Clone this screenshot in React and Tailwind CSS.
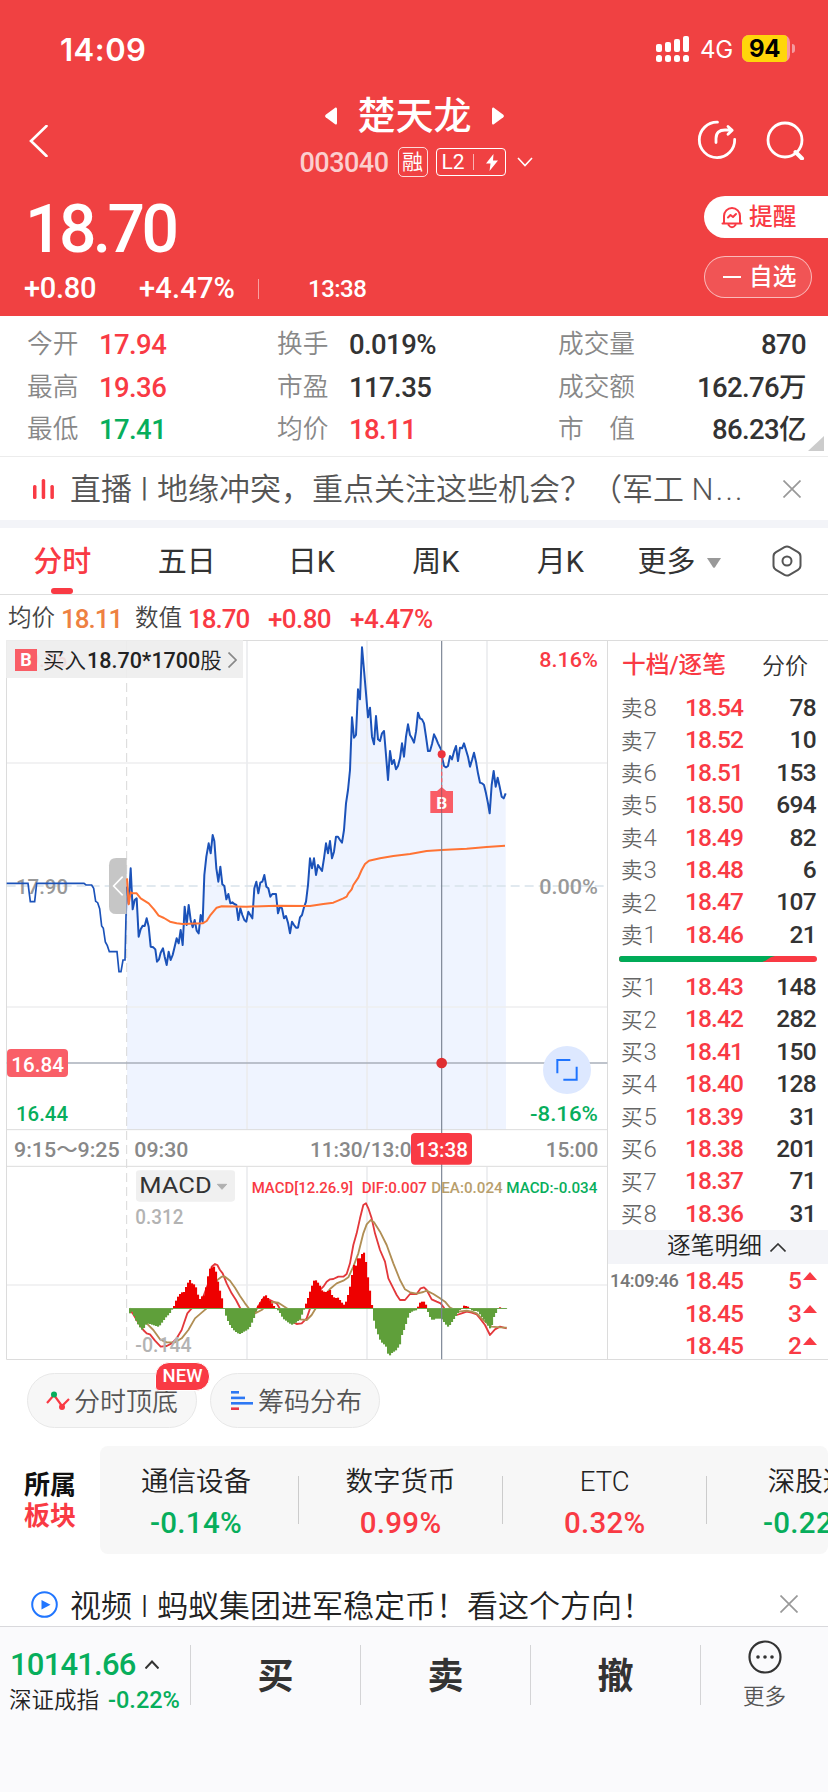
import { clsx } from 'clsx';

const STATS = [
  [
    { label: '今开', value: '17.94', tone: 'text-[#f93a44]' },
    { label: '最高', value: '19.36', tone: 'text-[#f93a44]' },
    { label: '最低', value: '17.41', tone: 'text-[#07ae5c]' },
  ],
  [
    { label: '换手', value: '0.019%', tone: 'text-[#333]' },
    { label: '市盈', value: '117.35', tone: 'text-[#333]' },
    { label: '均价', value: '18.11', tone: 'text-[#f93a44]' },
  ],
  [
    { label: '成交量', value: '870', tone: 'text-[#333]' },
    { label: '成交额', value: '162.76万', tone: 'text-[#333]' },
    { label: '市　值', value: '86.23亿', tone: 'text-[#333]' },
  ],
];

const TABS = ['分时', '五日', '日K', '周K', '月K'];

const ASKS = [
  ['卖8', '18.54', 78],
  ['卖7', '18.52', 10],
  ['卖6', '18.51', 153],
  ['卖5', '18.50', 694],
  ['卖4', '18.49', 82],
  ['卖3', '18.48', 6],
  ['卖2', '18.47', 107],
  ['卖1', '18.46', 21],
];

const BIDS = [
  ['买1', '18.43', 148],
  ['买2', '18.42', 282],
  ['买3', '18.41', 150],
  ['买4', '18.40', 128],
  ['买5', '18.39', 31],
  ['买6', '18.38', 201],
  ['买7', '18.37', 71],
  ['买8', '18.36', 31],
];

const TRADES = [
  ['14:09:46', '18.45', 5],
  ['', '18.45', 3],
  ['', '18.45', 2],
];

const SECTORS = [
  { name: '通信设备', change: '-0.14%', up: false },
  { name: '数字货币', change: '0.99%', up: true },
  { name: 'ETC', change: '0.32%', up: true },
  { name: '深股通', change: '-0.22%', up: false },
];

// Chart data is kept in a 1824 x 2160 space, three units to a pixel.
const PRE_OPEN =
  '20,730 84,730 91,785 104,785 110,730 252,730 258,735 275,735 281,745 287,784 293,788 299,806 305,858 310,865 316,906 322,917 328,935 351,935 357,995 363,995 369,960 375,960 378,830 381,740';
const PRICE =
  '381,740 386,790 392,685 398,808 404,780 410,775 416,890 422,868 428,857 434,858 440,835 446,860 452,920 460,922 466,928 471,965 477,958 482,938 489,925 494,950 500,975 506,935 512,960 518,945 524,920 530,895 536,910 542,870 548,915 554,800 560,855 566,795 572,840 578,862 584,840 590,872 596,880 602,825 608,845 613,705 619,650 626,610 632,640 638,585 643,603 649,685 655,725 661,680 667,733 673,738 679,778 685,762 691,790 697,787 703,792 709,795 715,840 721,805 727,825 733,840 739,845 745,815 751,825 757,835 763,745 769,725 775,760 781,728 787,725 793,705 799,740 805,745 811,770 817,762 828,762 834,820 840,800 846,805 852,835 858,828 864,848 870,880 876,845 882,855 888,863 894,863 900,832 906,825 912,802 918,785 924,735 930,655 936,685 942,655 948,705 954,675 966,693 972,655 978,610 984,640 990,603 996,655 1002,635 1008,590 1014,590 1020,600 1026,608 1032,570 1038,490 1044,450 1050,390 1056,232 1062,293 1068,285 1074,148 1080,178 1086,22 1092,90 1098,160 1104,232 1110,203 1116,290 1122,313 1128,228 1134,298 1140,303 1146,280 1152,273 1158,345 1164,420 1170,333 1176,372 1182,360 1188,388 1194,378 1200,355 1206,310 1212,350 1218,290 1224,253 1230,285 1236,295 1242,308 1248,275 1254,218 1260,235 1266,238 1272,250 1278,290 1284,333 1290,333 1296,312 1302,283 1308,295 1314,310 1320,322 1324,330 1328,360 1332,378 1338,382 1344,378 1350,348 1356,358 1362,335 1368,318 1374,363 1380,323 1386,325 1392,310 1398,330 1404,350 1410,380 1416,360 1422,338 1428,365 1434,400 1440,428 1446,430 1452,435 1458,460 1464,490 1469,520 1475,435 1481,393 1487,440 1493,413 1499,440 1505,470 1511,475 1517,460';
const AVERAGE =
  '381,715 386,793 392,757 398,760 410,760 422,775 446,790 462,808 476,827 492,834 510,845 530,850 548,852 608,850 620,843 630,827 650,803 665,799 740,800 830,797 930,798 970,792 1000,788 1030,775 1040,770 1045,760 1055,748 1060,735 1075,713 1085,690 1095,672 1107,662 1140,655 1180,648 1230,642 1280,633 1325,630 1400,626 1460,621 1515,617';
const DIF =
  '390,2010 398,2020 410,2040 430,2070 440,2080 450,2083 465,2102 482,2120 500,2118 515,2110 530,2095 545,2070 550,2055 562,2020 575,2005 590,2000 610,1970 625,1930 635,1880 645,1872 652,1875 660,1890 668,1900 680,1930 695,1960 708,1980 722,2007 740,2040 755,2035 768,2010 790,1975 810,1980 830,1990 845,2015 860,2035 875,2045 890,2052 905,2050 920,2035 932,2000 950,1960 970,1940 980,1925 990,1918 1000,1917 1015,1910 1030,1910 1040,1902 1050,1870 1060,1815 1070,1780 1080,1735 1090,1695 1098,1690 1105,1705 1115,1735 1125,1780 1140,1830 1155,1865 1165,1915 1180,1945 1190,1965 1200,1980 1215,1980 1230,1962 1250,1962 1262,1945 1272,1942 1280,1950 1295,1978 1310,1985 1322,1990 1333,2005 1345,2020 1370,2025 1385,2020 1400,2015 1415,2018 1430,2023 1440,2035 1455,2055 1470,2085 1485,2068 1500,2060 1520,2065';
const DEA =
  '390,2005 420,2035 440,2050 460,2070 480,2098 500,2107 525,2107 545,2095 565,2070 585,2035 605,2018 620,2005 640,1955 652,1920 665,1910 675,1910 690,1922 705,1943 720,1968 735,1990 748,2007 765,2020 785,2010 800,1995 815,1986 835,1988 850,1998 865,2008 880,2025 900,2038 920,2040 935,2025 950,2000 970,1970 990,1947 1010,1930 1030,1922 1045,1912 1060,1880 1075,1840 1090,1780 1100,1753 1112,1740 1122,1747 1140,1775 1160,1815 1180,1870 1200,1920 1215,1948 1230,1957 1250,1961 1270,1956 1280,1952 1300,1962 1320,1975 1335,1985 1350,2003 1375,2015 1400,2012 1415,2015 1430,2020 1450,2040 1475,2060 1500,2062 1520,2063';

// [x, height] turning points of the histogram; the bars between are interpolated.
const HISTOGRAM = [
  [387, -18], [398, -8], [404, -30], [416, -52], [428, -66], [437, -50], [446, -45], [458, -50], [476, -56],
  [488, -40], [500, -25], [512, -12], [518, 0], [524, 10], [530, 30], [542, 45], [548, 50], [554, 48], [560, 72],
  [570, 85], [578, 72], [586, 72], [592, 45], [600, 28], [608, 38], [614, 40], [622, 85], [628, 118], [634, 120],
  [640, 128], [646, 120], [652, 90], [658, 60], [664, 40], [672, 0], [680, -30], [690, -50], [700, -65],
  [718, -78], [736, -68], [748, -60], [760, -35], [768, -10], [774, 8], [784, 25], [796, 42], [806, 28],
  [818, 12], [828, 0], [838, -10], [850, -32], [862, -40], [875, -50], [890, -42], [900, -33], [908, -15],
  [914, 2], [922, 25], [933, 60], [939, 75], [945, 90], [951, 78], [957, 75], [965, 55], [975, 48], [990, 55],
  [997, 38], [1005, 30], [1015, 32], [1025, 18], [1033, 10], [1038, 20], [1044, 40], [1050, 65], [1056, 100],
  [1062, 130], [1068, 128], [1074, 150], [1083, 150], [1089, 175], [1095, 158], [1101, 120], [1107, 65],
  [1113, 40], [1118, -10], [1124, -50], [1133, -75], [1142, -100], [1152, -108], [1160, -118], [1166, -145],
  [1175, -135], [1190, -125], [1200, -108], [1206, -80], [1214, -60], [1222, -35], [1228, -15], [1240, -8],
  [1250, -5], [1255, 8], [1262, 20], [1275, 20], [1280, 5], [1285, -15], [1292, -30], [1298, -36], [1310, -30],
  [1325, -32], [1335, -45], [1343, -56], [1352, -48], [1360, -35], [1370, -20], [1380, -5], [1388, 3], [1392, 8],
  [1405, 5], [1412, -5], [1420, -8], [1432, -8], [1440, -18], [1455, -38], [1462, -50], [1470, -60],
  [1475, -55], [1480, -30], [1486, -18], [1492, -5], [1497, 3], [1505, 2], [1512, -2], [1520, -2],
];

function buildBars() {
  const bars = [];
  let k = 0;
  for (let x = 387; x < 1518; x += 6) {
    while (k < HISTOGRAM.length - 2 && HISTOGRAM[k + 1][0] < x + 3) k += 1;
    const [x0, y0] = HISTOGRAM[k];
    const [x1, y1] = HISTOGRAM[k + 1];
    const t = (x + 3 - x0) / (x1 - x0);
    bars.push({ x, h: Math.round(y0 + (y1 - y0) * Math.min(1, t)) });
  }
  return bars;
}

const BARS = buildBars();

function CloseIcon() {
  return (
    <svg viewBox="0 0 18 18" className="h-[18px] w-[18px]" fill="none" stroke="#999" strokeWidth="1.7">
      <path d="M0.5 0.5l17 17M17.5 0.5l-17 17" />
    </svg>
  );
}

function StatusBar() {
  return (
    <div className="flex h-[72px] items-end justify-between pr-[33px] pl-[60px] text-white">
      <span className="mb-[4px] font-[Inter] text-[31px] leading-[36px] font-semibold tracking-[0.500px]">14:09</span>
      <div className="mb-[9px] flex items-center">
        <svg viewBox="0 0 33 26" className="h-[26px] w-[33px]" fill="#fff">
          <rect x="0" y="8" width="6" height="8" rx="2" />
          <rect x="9" y="6" width="6" height="10" rx="2" />
          <rect x="18" y="3" width="6" height="13" rx="2" />
          <rect x="27" y="0" width="6" height="16" rx="2" />
          <rect x="0" y="19" width="6" height="7" rx="2.5" />
          <rect x="9" y="19" width="6" height="7" rx="2.5" />
          <rect x="18" y="19" width="6" height="7" rx="2.5" />
          <rect x="27" y="19" width="6" height="7" rx="2.5" />
        </svg>
        <span className="mt-[2px] ml-[11px] w-[33px] font-[Inter] text-[24px] leading-[27px] tracking-[-0.300px]">4G</span>
        <div className="ml-[9px] flex h-[27px] w-[48px] overflow-hidden rounded-[7px] bg-[#f59aa0]">
          <span className="w-[45px] bg-[#ffd60a] text-center font-[Inter] text-[24px] leading-[27px] font-bold tracking-[-0.5px] text-black">
            94
          </span>
        </div>
        <span className="ml-[2px] h-[9px] w-[3px] rounded-r-full bg-[#f59aa0]" />
      </div>
    </div>
  );
}

function TitleBar() {
  return (
    <div className="flex h-[114px] items-start justify-between pr-[22px] pl-[29px] text-white">
      <svg viewBox="0 0 19 32" className="mt-[53px] h-[32px] w-[19px]" fill="none" stroke="#fff" strokeWidth="2.6">
        <path d="M17.5 1L2 16l15.500 15" strokeLinecap="round" />
      </svg>

      <div className="ml-[87px] flex flex-col items-center pt-[20px]">
        <div className="flex h-[48px] items-center pr-[3px]">
          <svg viewBox="0 0 12 18" className="h-[18px] w-[12px]" fill="#fff">
            <path d="M10.500 0.500Q12 0 12 2v14q0 2-1.500 1.500L0.700 10.300Q-0.500 9 0.700 7.700z" />
          </svg>
          <h1 className="mx-[20px] text-[38px] leading-[48px] font-medium">楚天龙</h1>
          <svg viewBox="0 0 12 18" className="h-[18px] w-[12px]" fill="#fff">
            <path d="M1.500 0.500Q0 0 0 2v14q0 2 1.500 1.500L11.300 10.300Q12.500 9 11.300 7.700z" />
          </svg>
        </div>
        <div className="mt-[7px] flex h-[30px] items-center">
          <span className="mt-px text-[27px] leading-[30px] font-medium tracking-[-0.5px] text-white/75">003040</span>
          <span className="ml-[9px] flex h-[30px] w-[30px] items-center justify-center rounded-[5px] border border-white/80 text-[21px] leading-none">
            融
          </span>
          <span className="ml-[8px] flex h-[28px] w-[70px] items-center rounded-[4px] border border-white pl-[5px]">
            <span className="text-[21px] leading-none">L2</span>
            <span className="ml-[8px] h-[16px] w-px bg-white/60" />
            <svg viewBox="0 0 12 17" className="ml-[12px] h-[17px] w-[12px]" fill="#fff">
              <path d="M7.500 0L0 9.500h4.500L3.500 17 12 6.500H7L7.500 0z" />
            </svg>
          </span>
          <svg viewBox="0 0 16 10" className="ml-[11px] h-[10px] w-[16px]" fill="none" stroke="#fff" strokeWidth="1.600">
            <path d="M1 1l7 7.500L15 1" />
          </svg>
        </div>
      </div>

      <div className="flex pt-[48px]">
        <svg viewBox="0 0 40 40" className="h-[40px] w-[40px]" fill="none" stroke="#fff" strokeWidth="2.800" strokeLinecap="round" strokeLinejoin="round">
          <path d="M20.500 2.200A17.700 17.700 0 1 0 37.700 19.500" />
          <path d="M19 22.500v-4c0-6 3-8.500 9-8.500h6M31 6.500l4.200 3.700-4.200 4" />
        </svg>
        <svg viewBox="0 0 40 40" className="ml-[29px] h-[40px] w-[40px]" fill="none" stroke="#fff" strokeWidth="2.800">
          <circle cx="19" cy="20" r="17" />
          <path d="M29.500 32l6.500 6.500" strokeWidth="4" strokeLinecap="round" />
        </svg>
      </div>
    </div>
  );
}

function Header() {
  return (
    <header className="h-[316px] bg-[#f04142]">
      <StatusBar />
      <TitleBar />
      <div className="flex justify-between text-white">
        <div>
          <div className="mt-[11px] ml-[25px] text-[66px] leading-[66px] font-medium tracking-[-3.600px]">18.70</div>
          <div className="mt-[8px] flex h-[36px] items-center text-[29px] font-medium">
            <span className="ml-[24px] w-[115px] tracking-[-0.300px]">+0.80</span>
            <span className="w-[119px] tracking-[0.200px]">+4.47%</span>
            <span className="h-[20px] w-px bg-white/50" />
            <span className="ml-[49px] text-[24px] tracking-[-0.500px]">13:38</span>
          </div>
        </div>
        <div className="pt-[10px]">
          <div className="flex h-[42px] w-[124px] items-center rounded-l-full bg-white pl-[17px] text-[#f93a44]">
            <svg viewBox="0 0 22 24" className="h-[24px] w-[22px]" fill="none" stroke="#f93a44" strokeWidth="2" strokeLinecap="round" strokeLinejoin="round">
              <path d="M1.500 18.500h19M3 18V11a8 8 0 0 1 16 0v7M7.500 20q3.500 4.500 7 0M7 12.500l2.500-2.500 2.500 2 3-3" />
            </svg>
            <span className="mt-px ml-[6px] text-[23.700px] leading-none font-medium">提醒</span>
          </div>
          <div className="mt-[18px] flex h-[42px] w-[108px] items-center rounded-full border border-white/60 bg-white/10 pl-[18px]">
            <span className="h-[2px] w-[18px] bg-white" />
            <span className="mt-px ml-[8px] text-[23.700px] leading-none font-medium">自选</span>
          </div>
        </div>
      </div>
    </header>
  );
}

function StatsGrid() {
  const widths = ['w-[250px] pl-[27px]', 'w-[280px] pl-[27px]', 'w-[298px] pl-[28px] pr-[22px]'];
  return (
    <section className="relative flex h-[141px] border-b border-[#ececec] pt-[8px]">
      {STATS.map((column, i) => (
        <div key={column[0].label} className={widths[i]}>
          {column.map((s) => (
            <div key={s.label} className={clsx('flex h-[42.300px] items-center', i === 2 && 'justify-between')}>
              <span className={clsx('text-[25.700px] leading-none font-[350] text-[#888]', i < 2 && 'w-[72px]')}>
                {s.label}
              </span>
              <span className={clsx('text-[27.500px] leading-none font-medium tracking-[-0.600px]', s.tone)}>
                {s.value}
              </span>
            </div>
          ))}
        </div>
      ))}
      <svg viewBox="0 0 16 15" className="absolute right-[4px] bottom-[5px] h-[15px] w-[16px]" fill="#ccc">
        <path d="M16 0v15H0z" />
      </svg>
    </section>
  );
}

function LiveTicker() {
  return (
    <div className="flex h-[71px] items-center border-b-[8px] border-[#f3f4f8] pr-[27px] pl-[33px]">
      <svg viewBox="0 0 21 20" className="h-[20px] w-[21px]" fill="#f93a44">
        <rect x="0" y="6" width="3.500" height="14" rx="1.500" />
        <rect x="8.700" y="0" width="3.500" height="20" rx="1.500" />
        <rect x="17.400" y="6" width="3.500" height="14" rx="1.500" />
      </svg>
      <p className="mt-[2px] ml-[16px] flex-1 text-[31px] leading-none font-[350] whitespace-nowrap text-[#555]">
        直播<span className="relative -top-[3px] inline-block w-[25px] text-center text-[28px] font-normal">|</span>
        地缘冲突，重点关注这些机会？（军工 <span className="tracking-[2.200px]">N...</span>
      </p>
      <CloseIcon />
    </div>
  );
}

function PeriodTabs() {
  return (
    <nav className="flex h-[67px] items-center border-b border-[#dedede] text-[29px] text-[#333]">
      {TABS.map((tab, i) => (
        <div
          key={tab}
          className={clsx('relative flex h-full w-[124.500px] items-center justify-center pt-[3px]', i === 0 && 'font-medium text-[#f93a44]')}
        >
          {tab}
          {i === 0 && <span className="absolute bottom-0 left-[51px] h-[6px] w-[22px] rounded-[3px] bg-[#f93a44]" />}
        </div>
      ))}
      <div className="ml-[15px] flex items-center pt-[3px]">
        更多
        <svg viewBox="0 0 14 10" className="ml-[11px] h-[10px] w-[14px]" fill="#999">
          <path d="M0 0h14L8 9.200q-1 1.200-2 0z" />
        </svg>
      </div>
      <svg viewBox="0 0 30 32" className="ml-[51px] h-[32px] w-[30px]" fill="none" stroke="#555" strokeWidth="2">
        <path d="M12.500 2.200q2.500-1.400 5 0l8.500 5q2.500 1.400 2.500 4.200v9.200q0 2.800-2.500 4.200l-8.500 5q-2.500 1.400-5 0l-8.500-5q-2.500-1.400-2.500-4.200v-9.200q0-2.800 2.500-4.200z" />
        <circle cx="15" cy="16" r="4.500" />
      </svg>
    </nav>
  );
}

function Legend() {
  return (
    <div className="flex h-[45px] items-center pt-[2px] pl-[8px] text-[26px] leading-none font-medium tracking-[-1px] text-[#f93a44]">
      <span className="w-[53px] text-[23.500px] font-[350] tracking-normal text-[#444]">均价</span>
      <span className="w-[74px] text-[#ee8142]">18.11</span>
      <span className="w-[53px] text-[23.500px] font-[350] tracking-normal text-[#444]">数值</span>
      <span className="w-[80px]">18.70</span>
      <span className="w-[82px] tracking-[-0.600px]">+0.80</span>
      <span className="tracking-[-0.400px]">+4.47%</span>
    </div>
  );
}

function Label({ x, y, w, size = 62, fill, weight = 500, children }) {
  return (
    <text x={x} y={y} textLength={w} lengthAdjust="spacingAndGlyphs" fontSize={size} fill={fill} fontWeight={weight}>
      {children}
    </text>
  );
}

function MinuteChart() {
  return (
    <div className="relative h-[720px] w-[608px]">
      <svg viewBox="0 0 1824 2160" className="block h-[720px] w-[608px]" fill="none">
        <path d={`M${PRICE.replaceAll(' ', 'L')}L1518,1469L381,1469Z`} fill="#eff4ff" />
        <path d="M20 369H1822M20 1101H1822M20 1935H1822" stroke="#eeeeef" strokeWidth="5" />
        <path d="M741 3V1469M1101 3V1469M1461 3V1469M741 1580V2158M1101 1580V2158M1461 1580V2158" stroke="#ebecef" strokeWidth="5" />
        <path d="M380 3V2158" stroke="#d8d8d8" strokeWidth="3" strokeDasharray="27 15" />
        <path d="M20 738H1822" stroke="#d8e2ea" strokeWidth="5" strokeDasharray="27 15" />
        <path d="M1824 1.500H19.500V2158.500H1824M1822.500 1.500V2158.500M19.500 1469H1822M19.500 1579H1822" stroke="#dcdcdc" strokeWidth="3" />

        <Label x={50} y={80} w={152} fill="#f93a44">19.36</Label>
        <Label x={48} y={762} w={156} fill="#999">17.90</Label>
        <Label x={1618} y={80} w={176} fill="#f93a44">8.16%</Label>
        <Label x={1618} y={762} w={176} fill="#999">0.00%</Label>

        <polyline points={PRE_OPEN} stroke="#1b52b9" strokeWidth="5" />
        <path d="M349 654h31v168h-31q-22 0-22-22V676q0-22 22-22z" fill="#c6c6c6" />
        <path d="M368 710l-27 28 27 28" stroke="#fff" strokeWidth="5" />
        <polyline points={PRICE} stroke="#1b52b9" strokeWidth="6" strokeLinejoin="round" />
        <polyline points={AVERAGE} stroke="#ff7334" strokeWidth="6" strokeLinejoin="round" />

        <polyline points={DIF} stroke="#e3383b" strokeWidth="5.500" strokeLinejoin="round" />
        <polyline points={DEA} stroke="#b08e54" strokeWidth="5.500" strokeLinejoin="round" />
        {BARS.map(({ x, h }) => (
          <rect
            key={x}
            x={x}
            y={h > 0 ? 2005 - h : 2005}
            width="6.300"
            height={Math.abs(h)}
            fill={h > 0 ? '#ee0000' : '#5f9f3a'}
          />
        ))}
        <path d="M387 2005.500H1520" stroke="#6fa54e" strokeWidth="3" />

        {/* crosshair */}
        <path d="M20 1269H1822" stroke="#a9afba" strokeWidth="5" />
        <path d="M1325 3V2158" stroke="#7b8494" strokeWidth="3.500" />
        <path d="M1325 355V440" stroke="#f3606a" strokeWidth="4" strokeDasharray="12 8" />
        <circle cx="1325" cy="343" r="12" fill="#ee343d" />
        <circle cx="1325" cy="1269" r="16" fill="#e02f31" />
        <path d="M1291 453h20l14-12 14 12h20v66h-68z" fill="#f95d66" />
        <Label x={1309} y={507} w={33} size={52} weight={700} fill="#fff">B</Label>
        <path d="M1325 441V519" stroke="#a0505c" strokeWidth="2.500" />

        <rect x="21" y="1227" width="183" height="84" rx="12" fill="#f95f68" />
        <Label x={34} y={1295} w={158} fill="#fff">16.84</Label>
        <Label x={48} y={1442} w={156} fill="#07ae5c">16.44</Label>
        <Label x={1590} y={1442} w={204} fill="#07ae5c">-8.16%</Label>
        <circle cx="1701" cy="1290" r="72" fill="#dde8ff" />
        <path d="M1711 1260H1672V1300M1690 1319H1730V1280" stroke="#1f74ff" strokeWidth="6" />

        <Label x={42} y={1550} w={317} fill="#888">9:15～9:25</Label>
        <Label x={403} y={1550} w={162} fill="#888">09:30</Label>
        <Label x={930} y={1550} w={340} fill="#888">11:30/13:00</Label>
        <Label x={1637} y={1550} w={158} fill="#888">15:00</Label>
        <rect x="1233" y="1479" width="183" height="95" rx="12" fill="#f93a44" />
        <Label x={1247} y={1551} w={157} fill="#fff">13:38</Label>

        <rect x="408" y="1591" width="297" height="94" rx="10" fill="#f0f0f0" />
        <Label x={418} y={1659} w={217} size={66} weight={400} fill="#333">MACD</Label>
        <path d="M652 1633h28l-14 15z" fill="#b0b0b0" stroke="#b0b0b0" strokeWidth="3" />
        <Label x={755} y={1658} w={304} size={44} fill="#f93a44">MACD[12.26.9]</Label>
        <Label x={1085} y={1658} w={196} size={44} fill="#f93a44">DIF:0.007</Label>
        <Label x={1294} y={1658} w={214} size={44} fill="#b89e6c">DEA:0.024</Label>
        <Label x={1519} y={1658} w={273} size={44} fill="#07ae5c">MACD:-0.034</Label>
        <Label x={406} y={1752} w={144} size={58} fill="#b3b3b3">0.312</Label>
        <Label x={406} y={2135} w={169} size={58} fill="#b3b3b3">-0.144</Label>
      </svg>

      <div className="absolute top-0 left-[6px] flex h-[38px] w-[237px] items-center bg-[#ededed]/90 pt-px pl-[9px] text-[21.500px] leading-none text-[#222]">
        <span className="flex h-[22px] w-[22px] items-center justify-center bg-[#f95d66] text-[18px] leading-none font-bold text-white">
          B
        </span>
        <span className="mt-[2px] ml-[6px] font-[350]">买入</span>
        <span className="mt-[2px] ml-[1px] font-medium">18.70*1700</span>
        <span className="mt-[2px] font-[350]">股</span>
        <svg viewBox="0 0 9 16" className="ml-[6px] h-[16px] w-[9px]" fill="none" stroke="#888" strokeWidth="1.700">
          <path d="M0.500 0.500L8 8l-7.500 7.500" />
        </svg>
      </div>
    </div>
  );
}

function BookRow({ row: [label, price, qty] }) {
  return (
    <div className="flex h-[32.400px] items-center pl-[13px] leading-none">
      <span className="w-[64px] text-[24px] font-[350] tracking-[-0.500px] text-[#666]">
        <span className="text-[21.500px] tracking-normal">{label[0]}</span>
        <span className="ml-px">{label[1]}</span>
      </span>
      <span className="text-[24.500px] font-medium tracking-[-0.900px] text-[#f93a44]">{price}</span>
      <span className="flex-1 pr-[12px] text-right text-[24.500px] font-medium tracking-[-0.700px] text-[#333]">{qty}</span>
    </div>
  );
}

function OrderBook() {
  return (
    <aside className="h-[720px] w-[220px] border-y border-[#dcdcdc]">
      <div className="flex h-[51px] items-center justify-between pr-[20px] pb-px pl-[14px] leading-none">
        <span className="text-[23.700px] font-medium text-[#f93a44]">十档/逐笔</span>
        <span className="text-[23px] font-[350] text-[#333]">分价</span>
      </div>
      {ASKS.map((row) => (
        <BookRow key={row[0]} row={row} />
      ))}
      <svg viewBox="0 0 198 6" className="mt-[5px] ml-[11px] block h-[6px] w-[198px]">
        <rect width="198" height="6" rx="3" fill="#f93a44" />
        <path d="M3 0H156Q151 1 149 3T143 6H3A3 3 0 0 1 3 0z" fill="#00ab58" />
      </svg>
      <div className="h-[9px]" />
      {BIDS.map((row) => (
        <BookRow key={row[0]} row={row} />
      ))}
      <div className="mb-px flex h-[34px] items-center justify-center bg-[#f3f4f8] pl-[17px] text-[23.700px] leading-none font-[350] text-[#222]">
        逐笔明细
        <svg viewBox="0 0 16 9" className="ml-[8px] h-[9px] w-[16px]" fill="none" stroke="#333" strokeWidth="1.600">
          <path d="M0.500 8.500L8 1l7.500 7.500" />
        </svg>
      </div>
      {TRADES.map(([time, price, qty], i) => (
        <div key={i} className="flex h-[32.400px] items-center pl-[2px] leading-none font-medium text-[#f93a44]">
          <span className="w-[75px] text-[18.200px] tracking-[-0.400px] text-[#777]">{time}</span>
          <span className="text-[24.500px] tracking-[-0.900px]">{price}</span>
          <span className="flex-1 text-right text-[24.500px]">{qty}</span>
          <svg viewBox="0 0 14 8" className="mr-[11px] mb-[10px] ml-px h-[8px] w-[14px]" fill="#f93a44">
            <path d="M7 0l7 8H0z" />
          </svg>
        </div>
      ))}
    </aside>
  );
}

function Chips() {
  return (
    <div className="flex h-[86px] gap-[13px] pt-[13px] pl-[27px] text-[26px] leading-none font-[350] text-[#555]">
      <div className="relative flex h-[55px] w-[170px] items-center rounded-full border border-[#e8e8e8] bg-[#f7f7f7] pl-[18px]">
        <svg viewBox="0 0 24 20" className="h-[20px] w-[24px]" fill="none" strokeWidth="2.200">
          <path d="M1 12l7-8 8 11 7-7" stroke="#f93a44" />
          <circle cx="8" cy="3.500" r="3" fill="#07ae5c" />
          <circle cx="16" cy="16" r="3" fill="#f93a44" />
        </svg>
        <span className="mt-[2px] ml-[4px]">分时顶底</span>
        <span className="absolute -top-[12px] left-[127px] flex h-[29px] w-[55px] items-center justify-center rounded-[14px] rounded-bl-[4px] border border-white bg-[#f93a44] text-[18.500px] font-medium text-white">
          NEW
        </span>
      </div>
      <div className="flex h-[55px] w-[170px] items-center rounded-full border border-[#e8e8e8] bg-[#f7f7f7] pl-[20px]">
        <svg viewBox="0 0 22 19" className="h-[19px] w-[22px]">
          <rect width="8" height="2.600" fill="#2d78f4" />
          <rect y="5.600" width="14" height="2.600" fill="#2d78f4" />
          <rect y="11" width="22" height="2.600" fill="#2d78f4" />
          <rect y="16.400" width="8" height="2.600" fill="#e8384a" />
        </svg>
        <span className="mt-[2px] ml-[5px]">筹码分布</span>
      </div>
    </div>
  );
}

function Sectors() {
  return (
    <section className="flex h-[108px]">
      <div className="flex w-[100px] shrink-0 flex-col justify-center pt-[2px] pl-[24px] text-[26px] leading-[31px] font-bold">
        <span className="text-[#111]">所属</span>
        <span className="text-[#f93a44]">板块</span>
      </div>
      <div className="flex flex-1 overflow-hidden rounded-[8px] bg-[#f7f7f7]">
        {SECTORS.map((s, i) => (
          <div key={s.name} className={clsx('flex shrink-0 items-center', i === 0 ? 'w-[199px]' : 'w-[204.200px]')}>
            <div className={clsx('flex-1 pt-[5px] text-center', i === 0 && 'pr-[6px]')}>
              <div className="text-[27.500px] leading-[40px] font-[350] text-[#222]">{s.name}</div>
              <div
                className={clsx(
                  'mt-px text-[29.500px] leading-[40px] font-medium tracking-[0.300px]',
                  s.up ? 'text-[#f93a44]' : 'text-[#07ae5c]',
                )}
              >
                {s.change}
              </div>
            </div>
            <span className="h-[48px] w-px bg-[#ccc]" />
          </div>
        ))}
      </div>
    </section>
  );
}

function VideoTicker() {
  return (
    <div className="flex h-[72px] items-end pr-[30px] pl-[31px]">
      <svg viewBox="0 0 27 27" className="mb-[8px] h-[27px] w-[27px]" fill="none">
        <circle cx="13.500" cy="13.500" r="12.300" stroke="#2176ff" strokeWidth="2" />
        <path d="M10.500 9v9.500l9-4.700z" fill="#2176ff" />
      </svg>
      <p className="mb-[2px] ml-[12px] flex-1 text-[31px] leading-[34px] font-[350] text-[#222]">
        视频<span className="relative -top-[3px] inline-block w-[25px] text-center text-[25px] leading-none font-normal">|</span>
        蚂蚁集团进军稳定币！看这个方向！
      </p>
      <div className="mb-[13px]">
        <CloseIcon />
      </div>
    </div>
  );
}

function BottomBar() {
  return (
    <footer className="flex h-[166px] border-t border-[#d9d9dc] bg-[#fafafc] pt-[18px]">
      <div className="w-[190px] pl-[10px]">
        <div className="flex h-[38px] items-center text-[31px] leading-none font-medium tracking-[-0.800px] text-[#07ae5c]">
          10141.66
          <svg viewBox="0 0 14 9" className="ml-[9px] h-[9px] w-[14px]" fill="none" stroke="#333" strokeWidth="2">
            <path d="M0.500 8.500L7 1.500l6.500 7" />
          </svg>
        </div>
        <div className="-ml-px flex h-[35px] items-center text-[22.500px] leading-none text-[#222]">
          <span className="font-[350]">深证成指</span>
          <span className="ml-[9px] text-[23.500px] font-medium text-[#07ae5c]">-0.22%</span>
        </div>
      </div>
      {['买', '卖', '撤'].map((action) => (
        <div
          key={action}
          className="flex h-[60px] w-[170px] items-center justify-center border-l border-[#d4d4d6] pt-[3px] text-[36px] leading-none font-bold text-[#333]"
        >
          {action}
        </div>
      ))}
      <div className="flex h-[60px] flex-1 flex-col items-center border-l border-[#d4d4d6]">
        <svg viewBox="0 0 34 34" className="-mt-[5px] h-[34px] w-[34px] shrink-0" fill="none">
          <circle cx="17" cy="17" r="15.500" stroke="#333" strokeWidth="2.200" />
          <g fill="#333">
            <circle cx="10" cy="17" r="1.800" />
            <circle cx="17" cy="17" r="1.800" />
            <circle cx="24" cy="17" r="1.800" />
          </g>
        </svg>
        <span className="mt-[10px] text-[21.500px] leading-[26px] font-[350] text-[#555]">更多</span>
      </div>
    </footer>
  );
}

export default function App() {
  return (
    <div className="h-[1792px] w-[828px] overflow-hidden bg-white font-[Roboto,'Noto_Sans_CJK_SC',sans-serif]">
      <Header />
      <StatsGrid />
      <LiveTicker />
      <PeriodTabs />
      <Legend />
      <div className="flex">
        <MinuteChart />
        <OrderBook />
      </div>
      <Chips />
      <Sectors />
      <VideoTicker />
      <BottomBar />
    </div>
  );
}
